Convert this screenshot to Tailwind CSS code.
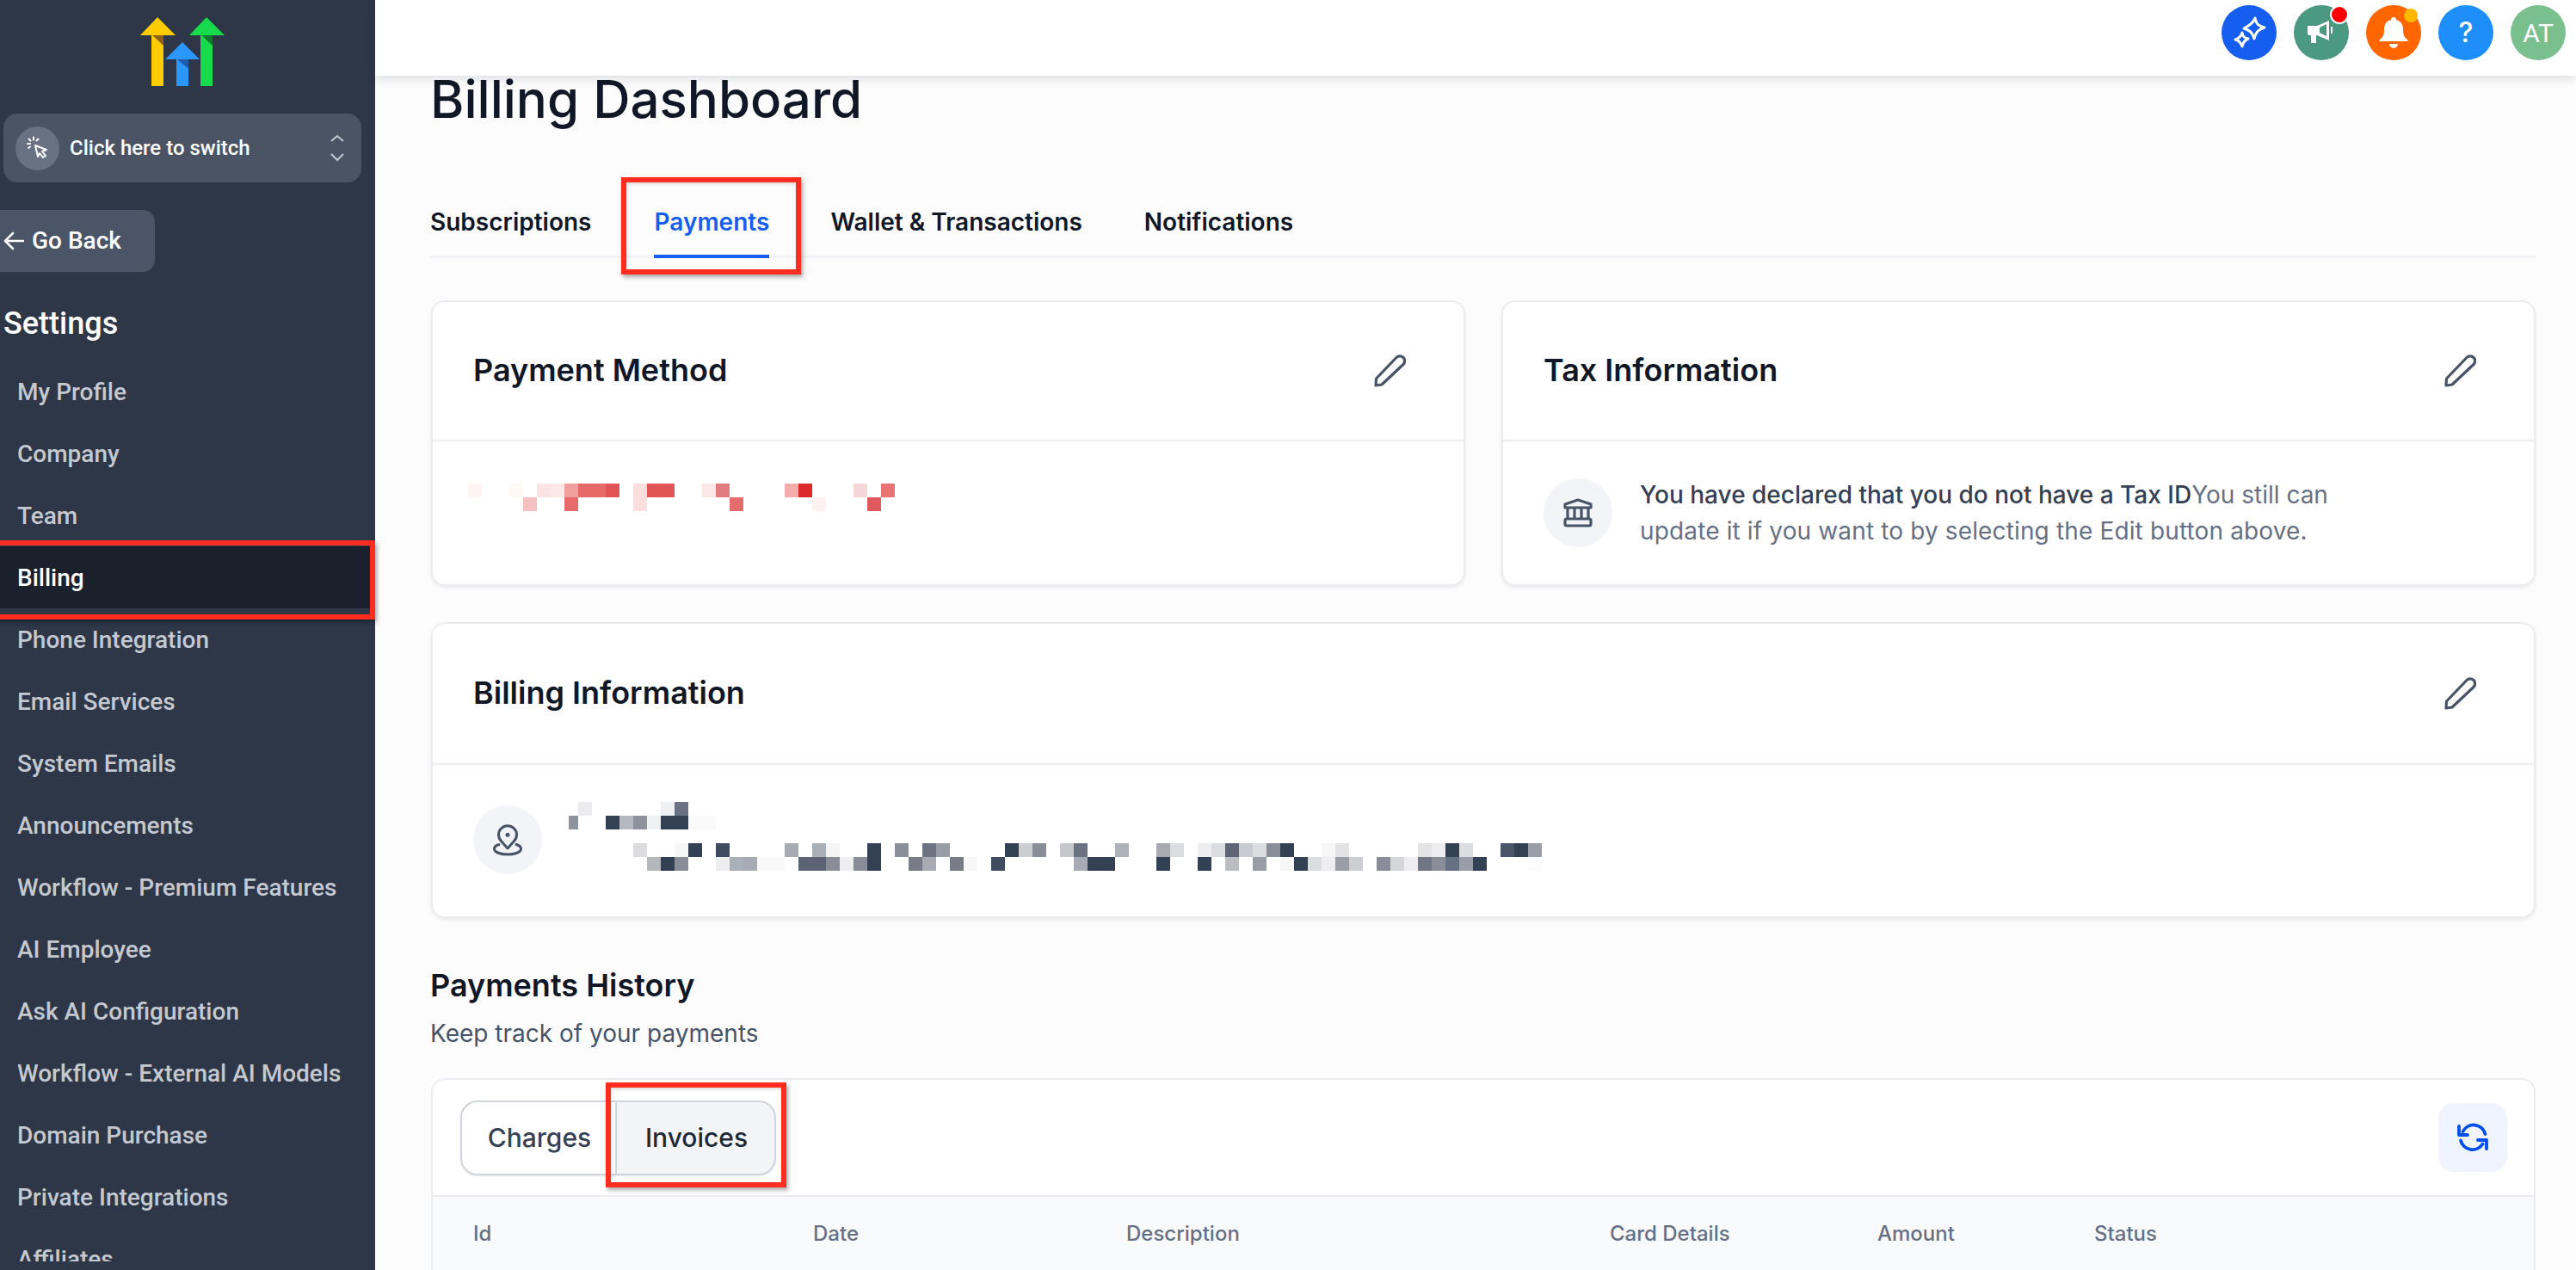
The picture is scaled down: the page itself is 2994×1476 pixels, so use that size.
<!doctype html>
<html>
<head>
<meta charset="utf-8">
<script src="https://cdn.jsdelivr.net/npm/@tailwindcss/browser@4"></script>
</head>
<body class="bg-[#fcfcfd]">
<div class="relative flex w-[2994px] h-[1476px] overflow-hidden font-['Inter',sans-serif]">

  <!-- Sidebar -->
  <aside class="w-[436px] h-full shrink-0 bg-[#2d3748] flex flex-col font-['Roboto',sans-serif] text-white">
    <div class="h-[132px] shrink-0 pt-5 pl-[163px]">
      <svg width="98" height="80" viewBox="0 0 98 80">
        <path d="M13 21h14v79H13z" fill="#ffcc00"/><path d="M0 21L20 0l21 21z" fill="#ffcc00"/><path d="M14 21h13v12z" fill="#8f6112"/>
        <path d="M42 49h14v31H42z" fill="#2b96fd"/><path d="M29 49L49 29l20 20z" fill="#2b96fd"/><path d="M43 49h13v11z" fill="#1f5ba8"/>
        <path d="M70 21h14v59H70z" fill="#17da4d"/><path d="M57 21L77 0l21 21z" fill="#17da4d"/><path d="M71 21h13v12z" fill="#0c7a2d"/>
      </svg>
    </div>
    <div class="ml-1 w-[416px] h-20 shrink-0 rounded-2xl bg-[#4a5464] flex items-center pl-[14px] pr-[19px]">
      <div class="w-[51px] h-[51px] rounded-full bg-[#697282] flex items-center justify-center">
        <svg width="28" height="28" viewBox="0 0 28 28" fill="none" stroke="#fff" stroke-width="2" stroke-linecap="round" stroke-linejoin="round">
          <path d="M11 11l13 5-5 2 4 5-3 2-4-5-2 4z"/><path d="M9 1.500v3M2 9h3M3.500 3.500l2 2M14.500 3.500l-2 2M3 14l2-1.500"/>
        </svg>
      </div>
      <span class="ml-3 text-[24px] font-medium leading-none">Click here to switch</span>
      <svg class="ml-auto" width="18" height="32" viewBox="0 0 18 32" fill="none" stroke="#c3c7ce" stroke-width="2"><path d="M2 8l7-6 7 6M2 23l7 7 7-7"/></svg>
    </div>
    <div class="mt-8 w-[180px] h-[72px] shrink-0 rounded-r-[14px] bg-[#4a5568] flex items-center pl-1 gap-[9px] text-[28px] font-medium">
      <svg width="24" height="22" viewBox="0 0 24 22" fill="none" stroke="#fff" stroke-width="2.600" stroke-linecap="round" stroke-linejoin="round"><path d="M23 11H2M11 2l-9 9 9 9"/></svg>
      <span>Go Back</span>
    </div>
    <h2 class="mt-[39px] pl-[4px] h-[43px] shrink-0 text-[36px] leading-[43px] font-medium">Settings</h2>
    <nav class="mt-[21px] h-[1047px] max-h-[1047px] overflow-hidden text-[28px] font-medium text-[#c4c8cf]">
      <div class="h-[72px] pl-5 pt-[2px] flex items-center">My Profile</div>
      <div class="h-[72px] pl-5 pt-[2px] flex items-center">Company</div>
      <div class="h-[72px] pl-5 pt-[2px] flex items-center">Team</div>
      <div class="h-[72px] pl-5 pt-[2px] flex items-center bg-[#1a202c] text-white">Billing</div>
      <div class="h-[72px] pl-5 pt-[2px] flex items-center">Phone Integration</div>
      <div class="h-[72px] pl-5 pt-[2px] flex items-center">Email Services</div>
      <div class="h-[72px] pl-5 pt-[2px] flex items-center">System Emails</div>
      <div class="h-[72px] pl-5 pt-[2px] flex items-center">Announcements</div>
      <div class="h-[72px] pl-5 pt-[2px] flex items-center">Workflow - Premium Features</div>
      <div class="h-[72px] pl-5 pt-[2px] flex items-center">AI Employee</div>
      <div class="h-[72px] pl-5 pt-[2px] flex items-center">Ask AI Configuration</div>
      <div class="h-[72px] pl-5 pt-[2px] flex items-center">Workflow - External AI Models</div>
      <div class="h-[72px] pl-5 pt-[2px] flex items-center">Domain Purchase</div>
      <div class="h-[72px] pl-5 pt-[2px] flex items-center">Private Integrations</div>
      <div class="h-[72px] pl-5 pt-[2px] flex items-center">Affiliates</div>
    </nav>
  </aside>

  <!-- Main -->
  <div class="flex-1 min-w-0 flex flex-col">
    <header class="h-[88px] shrink-0 bg-white shadow-[0_4px_10px_rgba(16,24,40,0.12)] z-10 flex justify-end items-start pt-[6px] pr-3 gap-5">
      <div class="relative w-16 h-16 rounded-full bg-[#155eef] flex items-center justify-center">
        <svg width="40" height="40" viewBox="0 0 40 40" fill="none" stroke="#fff" stroke-width="3" stroke-linejoin="round"><path d="M27 3C28 9 30 12 38 14C31 16 28 19 26 27C24 20 21 17 14 15C20 12 25 9 27 3z"/><path d="M12 20C12.500 24 14 26 19 27C15 28.500 13 31 12 36C10.500 32 9 29 4 28C8 27 10.500 24.500 12 20z"/></svg>
      </div>
      <div class="relative w-16 h-16 rounded-full bg-[#4b9980] flex items-center justify-center">
        <svg width="36" height="36" viewBox="0 0 36 36" fill="#fff"><path d="M2 10h11l14-6v23l-14-6H12v9H6v-9H4a2 2 0 0 1-2-2z"/><path d="M24 8l-8 4v6l8 4z" fill="#4b9980"/><path d="M29 11h2v8h-2z"/></svg>
        <span class="absolute top-0 right-0 w-[22px] h-[22px] rounded-full bg-[#ff0000] border-2 border-white"></span>
      </div>
      <div class="relative w-16 h-16 rounded-full bg-[#ff6600] flex items-center justify-center">
        <svg width="34" height="36" viewBox="0 0 34 36" fill="#fff"><path d="M17 0a3 3 0 0 1 3 3c6 1.500 8 6 8 11 0 6 1 9 5 12a1 1 0 0 1-1 2H2a1 1 0 0 1-1-2c4-3 5-6 5-12 0-5 2-9.500 8-11a3 3 0 0 1 3-3z"/><path d="M12 31h10a5 5 0 0 1-10 0z"/></svg>
        <span class="absolute top-1 right-[4px] w-4 h-4 rounded-full bg-[#fdb900]"></span>
      </div>
      <div class="w-16 h-16 rounded-full bg-[#1e8ffa] flex items-center justify-center text-white font-medium text-[32px]">?</div>
      <div class="w-16 h-16 rounded-full bg-[#7abf8e] flex items-center justify-center text-white font-['Roboto',sans-serif] text-[30px]">AT</div>
    </header>

    <main class="flex-1 min-h-0 overflow-hidden pl-[64px] pr-[47px]">
      <h1 class="mt-[-8px] h-[70px] text-[60px] leading-[70px] font-medium text-[#101828]">Billing Dashboard</h1>

      <div class="mt-[5px] flex h-[145px] border-b-[3px] border-[#f2f4f7] text-[28px] font-semibold text-[#101828]">
        <span class="pt-[82px]">Subscriptions</span>
        <span class="ml-[73px] pt-[82px] w-[134px] h-[145px] text-[#155eef] border-b-4 border-[#155eef]">Payments</span>
        <span class="ml-[71px] pt-[82px]">Wallet &amp; Transactions</span>
        <span class="ml-[72px] pt-[82px]">Notifications</span>
      </div>

      <div class="mt-[49px] ml-[1px] flex gap-[42px]">
        <section class="flex-1 h-[332px] bg-white rounded-[16px] border-2 border-[#eaecf0] shadow-[0_2px_4px_rgba(16,24,40,0.08)]">
          <div class="h-[162px] pb-[2px] border-b-2 border-[#eaecf0] flex items-center justify-between pl-[47px] pr-[67px]">
            <h3 class="text-[36px] font-semibold text-[#101828]">Payment Method</h3>
            <svg width="40" height="40" viewBox="0 0 40 40" fill="none" stroke="#475467" stroke-width="3.200" stroke-linecap="round" stroke-linejoin="round"><path d="M5 38L5.500 30L29 5.500a5 5 0 0 1 8 8L12 37z"/></svg>
          </div>
          <div class="mt-[49px] ml-[41px] grid grid-cols-[repeat(31,16px)] grid-rows-[16px_16px]">
            <i class="col-start-1 row-start-1 bg-[#fdf4f3]"></i><i class="col-start-4 row-start-1 bg-[#fef8f7]"></i><i class="col-start-6 row-start-1 bg-[#fbe4e3]"></i><i class="col-start-7 row-start-1 bg-[#fbe8e6]"></i><i class="col-start-8 row-start-1 bg-[#ef9f9d]"></i><i class="col-start-9 row-start-1 bg-[#e76a69]"></i><i class="col-start-10 row-start-1 bg-[#e76a69]"></i><i class="col-start-11 row-start-1 bg-[#e15557]"></i>
            <i class="col-start-13 row-start-1 bg-[#fbdfde]"></i><i class="col-start-14 row-start-1 bg-[#e15557]"></i><i class="col-start-15 row-start-1 bg-[#e15557]"></i><i class="col-start-18 row-start-1 bg-[#fbe8e6]"></i><i class="col-start-19 row-start-1 bg-[#e27c7e]"></i><i class="col-start-24 row-start-1 bg-[#f3abab]"></i><i class="col-start-25 row-start-1 bg-[#dc2a2a]"></i><i class="col-start-29 row-start-1 bg-[#f5d5d5]"></i><i class="col-start-31 row-start-1 bg-[#e97373]"></i>
            <i class="col-start-5 row-start-2 bg-[#f4c0c1]"></i><i class="col-start-8 row-start-2 bg-[#e76a6c]"></i><i class="col-start-13 row-start-2 bg-[#fbdfe0]"></i><i class="col-start-20 row-start-2 bg-[#e56c6c]"></i><i class="col-start-26 row-start-2 bg-[#fcf2f2]"></i><i class="col-start-30 row-start-2 bg-[#e0595f]"></i>
          </div>
        </section>
        <section class="flex-1 h-[332px] bg-white rounded-[16px] border-2 border-[#eaecf0] shadow-[0_2px_4px_rgba(16,24,40,0.08)]">
          <div class="h-[162px] pb-[2px] border-b-2 border-[#eaecf0] flex items-center justify-between pl-[47px] pr-[67px]">
            <h3 class="text-[36px] font-semibold text-[#101828]">Tax Information</h3>
            <svg width="40" height="40" viewBox="0 0 40 40" fill="none" stroke="#475467" stroke-width="3.200" stroke-linecap="round" stroke-linejoin="round"><path d="M5 38L5.500 30L29 5.500a5 5 0 0 1 8 8L12 37z"/></svg>
          </div>
          <div class="mt-[41px] ml-[47px] flex items-center gap-[32px]">
            <div class="w-20 h-20 rounded-full bg-[#f2f4f7] flex items-center justify-center shrink-0">
              <svg width="36" height="36" viewBox="0 0 36 36" fill="none" stroke="#475467" stroke-width="3.200" stroke-linejoin="round"><path d="M3 12V8L18 3l15 5v4z"/><path d="M6 12v13M14 12v13M22 12v13M30 12v13"/><rect x="3" y="25" width="30" height="8" rx="2"/></svg>
            </div>
            <p class="w-[830px] text-[28px] leading-[42px] text-[#667085]"><span class="font-medium text-[#344054]">You have declared that you do not have a Tax ID</span>You still can<br><span class="tracking-[0.14px]">update it if you want to by selecting the Edit button above.</span></p>
          </div>
        </section>
      </div>

      <section class="mt-[42px] ml-[1px] h-[344px] bg-white rounded-[16px] border-2 border-[#eaecf0] shadow-[0_2px_4px_rgba(16,24,40,0.08)]">
        <div class="h-[164px] pb-[2px] border-b-2 border-[#eaecf0] flex items-center justify-between pl-[47px] pr-[67px]">
          <h3 class="text-[36px] font-semibold text-[#101828]">Billing Information</h3>
          <svg width="40" height="40" viewBox="0 0 40 40" fill="none" stroke="#475467" stroke-width="3.200" stroke-linecap="round" stroke-linejoin="round"><path d="M5 38L5.500 30L29 5.500a5 5 0 0 1 8 8L12 37z"/></svg>
        </div>
        <div class="mt-[43px] ml-[47px] flex items-start">
          <div class="mt-[4px] w-20 h-20 rounded-full bg-[#f2f4f7] flex items-center justify-center shrink-0">
            <svg width="40" height="40" viewBox="0 0 40 40" fill="none" stroke="#475467" stroke-width="3" stroke-linecap="round" stroke-linejoin="round"><path d="M20 30L12.500 21.500A10.500 10.500 0 1 1 27.500 21.500Z"/><circle cx="20" cy="14.300" r="2.500" fill="#475467" stroke="none"/><path d="M10 25.500C6 26.500 4.500 28.500 4.500 30.500C4.500 34.500 11.500 37 20 37S35.500 34.500 35.500 30.500C35.500 28.500 34 26.500 30 25.500"/></svg>
          </div>
          <div class="ml-[26px] grid grid-cols-[repeat(71,16px)] grid-rows-[repeat(5,16px)]">
            <i class="col-start-2 row-start-1 bg-[#ececee]"></i><i class="col-start-8 row-start-1 bg-[#eff0f2]"></i><i class="col-start-9 row-start-1 bg-[#6a7283]"></i>
            <i class="col-start-1 row-start-2 ml-[5px] bg-[#8d939f]"></i><i class="col-start-4 row-start-2 bg-[#344054]"></i><i class="col-start-5 row-start-2 bg-[#b5b8bf]"></i><i class="col-start-6 row-start-2 bg-[#8e929d]"></i><i class="col-start-7 row-start-2 bg-[#eff0f2]"></i><i class="col-start-8 row-start-2 bg-[#344054]"></i><i class="col-start-9 row-start-2 bg-[#344054]"></i><i class="col-start-10 row-start-2 bg-[#fafafb]"></i><i class="col-start-11 row-start-2 bg-[#fafafb]"></i>
            <i class="col-start-6 row-start-4 bg-[#dddddf]"></i><i class="col-start-9 row-start-4 bg-[#f7f7f8]"></i><i class="col-start-10 row-start-4 bg-[#344054]"></i><i class="col-start-12 row-start-4 bg-[#414b5f]"></i><i class="col-start-17 row-start-4 bg-[#a8abb3]"></i><i class="col-start-19 row-start-4 bg-[#aab0b8]"></i><i class="col-start-20 row-start-4 bg-[#f5f5f6]"></i><i class="col-start-23 row-start-4 bg-[#344054]"></i><i class="col-start-25 row-start-4 bg-[#8a8e98]"></i><i class="col-start-27 row-start-4 bg-[#6b7280]"></i><i class="col-start-28 row-start-4 bg-[#999da6]"></i><i class="col-start-33 row-start-4 bg-[#344054]"></i><i class="col-start-34 row-start-4 bg-[#cccdd1]"></i><i class="col-start-35 row-start-4 bg-[#888d97]"></i><i class="col-start-37 row-start-4 bg-[#c5c7ca]"></i><i class="col-start-38 row-start-4 bg-[#6b7280]"></i><i class="col-start-41 row-start-4 bg-[#aeb1b7]"></i><i class="col-start-44 row-start-4 bg-[#a9abb1]"></i><i class="col-start-45 row-start-4 bg-[#dcdde0]"></i><i class="col-start-47 row-start-4 bg-[#eeeef0]"></i><i class="col-start-48 row-start-4 bg-[#dcdde0]"></i><i class="col-start-49 row-start-4 bg-[#5e6676]"></i><i class="col-start-50 row-start-4 bg-[#c8ccd2]"></i><i class="col-start-51 row-start-4 bg-[#dcdde0]"></i><i class="col-start-52 row-start-4 bg-[#888d97]"></i><i class="col-start-53 row-start-4 bg-[#344054]"></i><i class="col-start-56 row-start-4 bg-[#f7f7f8]"></i><i class="col-start-57 row-start-4 bg-[#e3e3e6]"></i><i class="col-start-63 row-start-4 bg-[#e3e3e6]"></i><i class="col-start-64 row-start-4 bg-[#eeeef0]"></i><i class="col-start-65 row-start-4 bg-[#344054]"></i><i class="col-start-66 row-start-4 bg-[#dcdde0]"></i><i class="col-start-69 row-start-4 bg-[#4a5568]"></i><i class="col-start-70 row-start-4 bg-[#344054]"></i><i class="col-start-71 row-start-4 bg-[#9a9ea7]"></i>
            <i class="col-start-7 row-start-5 bg-[#b5b7bc]"></i><i class="col-start-8 row-start-5 bg-[#344054]"></i><i class="col-start-9 row-start-5 bg-[#888d97]"></i><i class="col-start-12 row-start-5 bg-[#eeeef0]"></i><i class="col-start-13 row-start-5 bg-[#aab0b8]"></i><i class="col-start-14 row-start-5 bg-[#a8abb3]"></i><i class="col-start-15 row-start-5 bg-[#fafafb]"></i><i class="col-start-16 row-start-5 bg-[#fafafb]"></i><i class="col-start-18 row-start-5 bg-[#5c6373]"></i><i class="col-start-19 row-start-5 bg-[#5c6373]"></i><i class="col-start-20 row-start-5 bg-[#888d97]"></i><i class="col-start-21 row-start-5 bg-[#eeeef0]"></i><i class="col-start-22 row-start-5 bg-[#888d97]"></i><i class="col-start-23 row-start-5 bg-[#344054]"></i><i class="col-start-26 row-start-5 bg-[#777c88]"></i><i class="col-start-27 row-start-5 bg-[#a8abb3]"></i><i class="col-start-29 row-start-5 bg-[#777c88]"></i><i class="col-start-30 row-start-5 bg-[#f7f7f8]"></i><i class="col-start-32 row-start-5 bg-[#414b5f]"></i><i class="col-start-38 row-start-5 bg-[#a8abb3]"></i><i class="col-start-39 row-start-5 bg-[#344054]"></i><i class="col-start-40 row-start-5 bg-[#344054]"></i><i class="col-start-44 row-start-5 bg-[#344054]"></i><i class="col-start-47 row-start-5 bg-[#344054]"></i><i class="col-start-49 row-start-5 bg-[#bbbdc2]"></i><i class="col-start-51 row-start-5 bg-[#999da6]"></i><i class="col-start-53 row-start-5 bg-[#f7f7f8]"></i><i class="col-start-54 row-start-5 bg-[#344054]"></i><i class="col-start-55 row-start-5 bg-[#dcdde0]"></i><i class="col-start-56 row-start-5 bg-[#eeeef0]"></i><i class="col-start-57 row-start-5 bg-[#999da6]"></i><i class="col-start-58 row-start-5 bg-[#ccced2]"></i><i class="col-start-60 row-start-5 bg-[#888d97]"></i><i class="col-start-61 row-start-5 bg-[#d5d6da]"></i><i class="col-start-62 row-start-5 bg-[#eeeef0]"></i><i class="col-start-63 row-start-5 bg-[#707684]"></i><i class="col-start-64 row-start-5 bg-[#888d97]"></i><i class="col-start-65 row-start-5 bg-[#667085]"></i><i class="col-start-66 row-start-5 bg-[#999da6]"></i><i class="col-start-67 row-start-5 bg-[#344054]"></i><i class="col-start-71 row-start-5 bg-[#fcfcfc]"></i>
          </div>
        </div>
      </section>

      <h3 class="mt-[56px] h-[44px] text-[36px] leading-[44px] font-semibold text-[#101828]">Payments History</h3>
      <p class="mt-[13px] h-[42px] text-[28px] leading-[42px] text-[#475467]">Keep track of your payments</p>

      <section class="mt-[31px] ml-[1px] h-[300px] bg-white rounded-t-[16px] border-2 border-[#eaecf0]">
        <div class="h-[136px] border-b-2 border-[#eaecf0] flex items-center justify-between pl-[32px] pr-[31px]">
          <div class="flex h-[87px] text-[30px] font-medium text-[#344054] rounded-[20px] shadow-[0_1px_2px_rgba(16,24,40,0.1)]">
            <div class="w-[182px] pl-[2px] rounded-l-[20px] border-2 border-[#d0d5dd] flex items-center justify-center">Charges</div>
            <div class="w-[187px] pl-[2px] -ml-[2px] rounded-r-[20px] border-2 border-[#d0d5dd] bg-[#f2f4f7] flex items-center justify-center text-[#1d2939]">Invoices</div>
          </div>
          <div class="w-20 h-20 rounded-[18px] bg-[#eff4ff] flex items-center justify-center">
            <svg width="40" height="40" viewBox="0 0 40 40" fill="none" stroke="#004eeb" stroke-width="3.800" stroke-linecap="round" stroke-linejoin="round"><path d="M4 7v10h10"/><path d="M8.500 13A14 14 0 0 1 34.500 16"/><path d="M36 33V23H26"/><path d="M6 23.500A14 14 0 0 0 31.500 27.500"/></svg>
          </div>
        </div>
        <div class="h-[160px] bg-[#f9fafb] flex items-start pt-[25px] text-[24px] font-medium text-[#667085]">
          <span class="ml-[47px] w-[395px]">Id</span>
          <span class="w-[364px]">Date</span>
          <span class="w-[562px]">Description</span>
          <span class="w-[311px]">Card Details</span>
          <span class="w-[252px]">Amount</span>
          <span>Status</span>
        </div>
      </section>
    </main>
  </div>

  <!-- Red annotation boxes drawn over the screenshot -->
  <div class="absolute left-[-6px] top-[628px] w-[442px] h-[92px] border-[6px] border-[#ff2d1f] shadow-[2px_3px_5px_rgba(0,0,0,0.35)] z-20"></div>
  <div class="absolute left-[722px] top-[206px] w-[209px] h-[113px] border-[6px] border-[#ff2d1f] shadow-[2px_3px_5px_rgba(0,0,0,0.35),inset_1px_2px_4px_rgba(0,0,0,0.15)] z-20"></div>
  <div class="absolute left-[704px] top-[1258px] w-[210px] h-[122px] border-[6px] border-[#ff2d1f] shadow-[2px_3px_5px_rgba(0,0,0,0.35),inset_1px_2px_4px_rgba(0,0,0,0.15)] z-20"></div>
</div>
</body>
</html>
